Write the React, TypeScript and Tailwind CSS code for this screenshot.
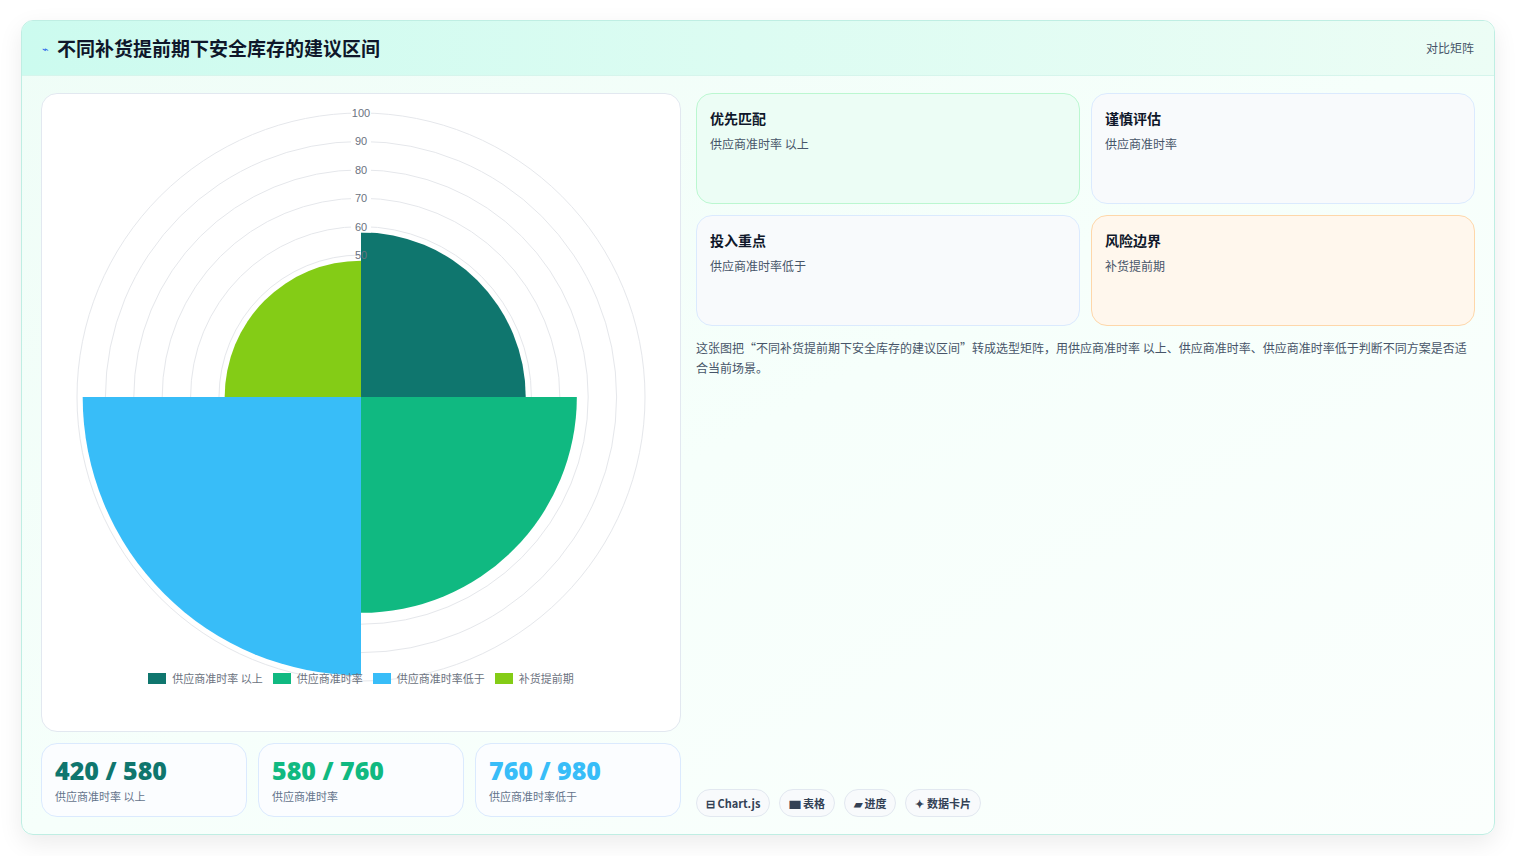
const C = 359 - 40; // unused helper for mental math

function arc(r: number, a0: number, a1: number, cx: number, cy: number) {
  const p = (a: number) => [cx + r * Math.cos(a), cy + r * Math.sin(a)];
  const [x0, y0] = p(a0);
  const [x1, y1] = p(a1);
  return `M${cx},${cy} L${x0},${y0} A${r},${r} 0 0 1 ${x1},${y1} Z`;
}

function PolarChart() {
  const cx = 319;
  const cy = 303;
  const k = 2.84;
  const rings = [10, 20, 30, 40, 50, 60, 70, 80, 90, 100];
  const segs = [
    { v: 58, c: "#0f766e", a0: -Math.PI / 2, a1: 0 },
    { v: 76, c: "#10b981", a0: 0, a1: Math.PI / 2 },
    { v: 98, c: "#38bdf8", a0: Math.PI / 2, a1: Math.PI },
    { v: 48, c: "#84cc16", a0: Math.PI, a1: (3 * Math.PI) / 2 },
  ];
  return (
    <svg width="638" height="590" className="block">
      {rings.map((r) => (
        <circle key={r} cx={cx} cy={cy} r={r * k} fill="none" stroke="#e5e7eb" strokeWidth="1" />
      ))}
      {segs.map((s, i) => (
        <path key={i} d={arc(s.v * k, s.a0, s.a1, cx, cy)} fill={s.c} />
      ))}
      {[100, 90, 80, 70, 60, 50].map((r) => (
        <g key={r}>
          <rect x={cx - 10} y={cy - r * k - 7} width="20" height="13" fill="white" opacity={r > 58 ? 1 : 0} />
          <text x={cx} y={cy - r * k + 4} textAnchor="middle" fontSize="11" fill="#6b7280" fontFamily="Liberation Sans, sans-serif">
            {r}
          </text>
        </g>
      ))}
    </svg>
  );
}

const legend = [
  { c: "bg-[#0f766e]", t: "供应商准时率 以上" },
  { c: "bg-[#10b981]", t: "供应商准时率" },
  { c: "bg-[#38bdf8]", t: "供应商准时率低于" },
  { c: "bg-[#84cc16]", t: "补货提前期" },
];

const stats = [
  { v: "420 / 580", c: "text-[#0f766e]", t: "供应商准时率 以上" },
  { v: "580 / 760", c: "text-[#10b981]", t: "供应商准时率" },
  { v: "760 / 980", c: "text-[#38bdf8]", t: "供应商准时率低于" },
];

const cards = [
  { h: "优先匹配", t: "供应商准时率 以上", cls: "bg-[#ecfdf5] border-[#bbf7d0]" },
  { h: "谨慎评估", t: "供应商准时率", cls: "bg-[#f8fafc] border-[#dbeafe]" },
  { h: "投入重点", t: "供应商准时率低于", cls: "bg-[#f8fafc] border-[#dbeafe]" },
  { h: "风险边界", t: "补货提前期", cls: "bg-[#fff7ed] border-[#fed7aa]" },
];

export default function App() {
  void C;
  return (
    <div className="min-h-screen bg-white px-[21px] pt-[20px] pb-[21px]" style={{ fontFamily: '"Noto Sans CJK SC", "Noto Sans", sans-serif' }}>
      <div className="h-[815px] rounded-xl border border-[#bfeee3] bg-gradient-to-br from-[#effdf7] via-[#f6fffb] to-[#fbfffd] shadow-[0_8px_24px_rgba(0,0,0,0.08)] overflow-hidden flex flex-col">
        <div className="h-[55px] flex items-center justify-between px-[20px] bg-gradient-to-r from-[#ccfbef] to-[#ecfdf5] border-b border-[#d6f5ec]">
          <div className="flex items-center gap-[8px]">
            <span className="text-[11px] text-[#2563eb]">⌁</span>
            <h1 className="text-[19px] font-bold text-[#0f172a]">不同补货提前期下安全库存的建议区间</h1>
          </div>
          <span className="text-[12px] text-[#475569]">对比矩阵</span>
        </div>
        <div className="flex-1 flex gap-[15px] px-[19px] pt-[17px] pb-[17px]">
          <div className="w-[640px] flex flex-col gap-[11px]">
            <div className="h-[639px] rounded-2xl border border-[#e2e8f0] bg-white flex flex-col items-center">
              <div className="pt-[0px]">
                <PolarChart />
              </div>
              <div className="flex items-center gap-[10px] text-[11px] text-[#6b7280] -mt-[14px]">
                {legend.map((l) => (
                  <div key={l.t} className="flex items-center gap-[6px]">
                    <span className={`w-[18px] h-[11px] ${l.c}`} />
                    {l.t}
                  </div>
                ))}
              </div>
            </div>
            <div className="grid grid-cols-3 gap-[11px]">
              {stats.map((s) => (
                <div key={s.v} className="h-[74px] rounded-2xl border border-[#dbeafe] bg-[#fbfdff] px-[13px] pt-[10px]">
                  <div className={`text-[25px] font-extrabold leading-[32px] ${s.c}`} style={{ fontFamily: '"Open Sans", sans-serif' }}>{s.v}</div>
                  <div className="text-[11px] text-[#64748b] mt-[2px]">{s.t}</div>
                </div>
              ))}
            </div>
          </div>
          <div className="flex-1 flex flex-col">
            <div className="grid grid-cols-2 gap-x-[11px] gap-y-[11px]">
              {cards.map((c) => (
                <div key={c.h} className={`h-[111px] rounded-2xl border px-[13px] pt-[14px] ${c.cls}`}>
                  <div className="text-[14px] font-bold text-[#0f172a]">{c.h}</div>
                  <div className="text-[12px] text-[#475569] mt-[6px]">{c.t}</div>
                </div>
              ))}
            </div>
            <p className="mt-[12px] text-[12px] leading-[20px] text-[#475569]">
              这张图把“不同补货提前期下安全库存的建议区间”转成选型矩阵，用供应商准时率 以上、供应商准时率、供应商准时率低于判断不同方案是否适合当前场景。
            </p>
            <div className="mt-auto flex gap-[9px]">
              {["⊟ Chart.js", "▆ 表格", "▰ 进度", "✦ 数据卡片"].map((t) => (
                <span key={t} className="h-[28px] px-[9px] rounded-full border border-[#e2e8f0] bg-[#f8fafc] text-[11px] font-bold text-[#334155] flex items-center">
                  {t}
                </span>
              ))}
            </div>
          </div>
        </div>
      </div>
    </div>
  );
}
